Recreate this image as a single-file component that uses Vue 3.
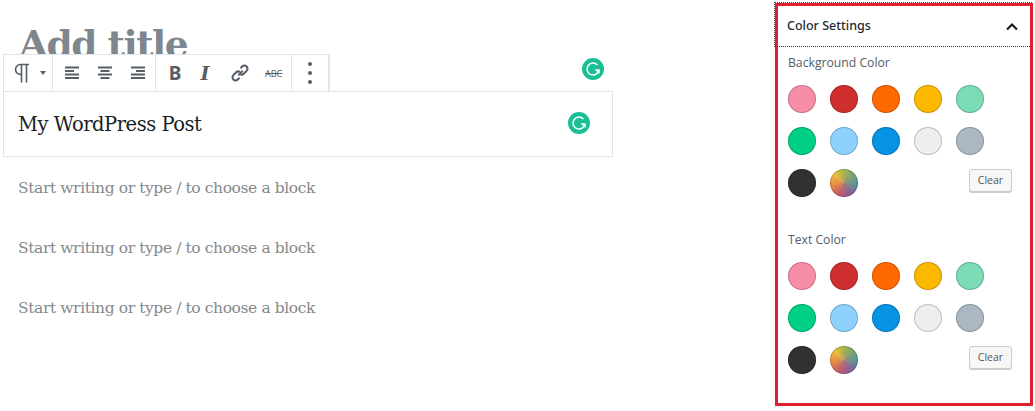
<script setup>
const swatchRows = [
  ['#f78da7', '#cf2e2e', '#ff6900', '#fcb900', '#7bdcb5'],
  ['#00d084', '#8ed1fc', '#0693e3', '#eeeeee', '#abb8c3'],
  ['#313131'],
]

const panels = [
  { label: 'Background Color', cls: 'panel-bg' },
  { label: 'Text Color', cls: 'panel-text' },
]

const placeholders = [1, 2, 3]
</script>

<template>
  <div class="page">
    <main class="editor">
      <h1 class="title">Add title</h1>

      <div class="toolbar-row">
        <div class="toolbar">
          <div class="tool-group group-block">
            <svg class="icon" width="20" height="24" viewBox="0 0 20 24">
              <path d="M17 3.500H8.500a4.800 4.800 0 0 0 0 9.900h1" fill="none" stroke="#555d66" stroke-width="1.600" />
              <path d="M9.500 3.500V21.500M14.500 3.500V21.500" fill="none" stroke="#555d66" stroke-width="1.600" />
            </svg>
            <span class="caret"></span>
          </div>
          <div class="tool-group group-align">
            <svg class="icon" width="16" height="14" viewBox="0 0 16 14">
              <path d="M1 1.500h14M1 5h9M1 8.500h14M1 12h14" stroke="#555d66" stroke-width="1.800" />
            </svg>
            <svg class="icon" width="16" height="14" viewBox="0 0 16 14">
              <path d="M1 1.500h14M3.500 5h9M1 8.500h14M3.500 12h9" stroke="#555d66" stroke-width="1.800" />
            </svg>
            <svg class="icon" width="16" height="14" viewBox="0 0 16 14">
              <path d="M1 1.500h14M6 5h9M1 8.500h14M1 12h14" stroke="#555d66" stroke-width="1.800" />
            </svg>
          </div>
          <div class="tool-group group-format">
            <span class="fmt fmt-b">B</span>
            <span class="fmt fmt-i">I</span>
            <svg class="icon" width="20" height="20" viewBox="0 0 20 20">
              <g fill="none" stroke="#555d66" stroke-width="2">
                <path d="M8.300 12.200l4.400-4.400" />
                <path d="M10.500 5.200l1.700-1.700a3.100 3.100 0 0 1 4.400 0 3.100 3.100 0 0 1 0 4.400l-2.800 2.800a3.100 3.100 0 0 1-3.600.500" />
                <path d="M9.500 14.800l-1.700 1.700a3.100 3.100 0 0 1-4.400 0 3.100 3.100 0 0 1 0-4.400l2.800-2.800a3.100 3.100 0 0 1 3.600-.500" />
              </g>
            </svg>
            <span class="fmt fmt-s">ABC</span>
          </div>
          <div class="tool-group group-more">
            <span class="dot"></span>
            <span class="dot"></span>
            <span class="dot"></span>
          </div>
        </div>
        <svg class="grammarly grammarly-top" width="22" height="22" viewBox="0 0 22 22">
          <circle cx="11" cy="11" r="11" fill="#1bbf95" />
          <path d="M15.400 6.900A6 6 0 1 0 17 11.800" fill="none" stroke="#fff" stroke-width="1.500" />
          <path d="M12.400 11.200h5.200v4.800z" fill="#fff" />
        </svg>
      </div>

      <div class="block">
        <p class="block-text">My WordPress Post</p>
        <svg class="grammarly" width="22" height="22" viewBox="0 0 22 22">
          <circle cx="11" cy="11" r="11" fill="#1bbf95" />
          <path d="M15.400 6.900A6 6 0 1 0 17 11.800" fill="none" stroke="#fff" stroke-width="1.500" />
          <path d="M12.400 11.200h5.200v4.800z" fill="#fff" />
        </svg>
      </div>

      <p v-for="n in placeholders" :key="n" class="placeholder">Start writing or type / to choose a block</p>
    </main>

    <aside class="sidebar">
      <header class="side-head">
        <span>Color Settings</span>
        <svg width="14" height="9" viewBox="0 0 14 9">
          <path d="M2 7.500l5-5 5 5" fill="none" stroke="#191e23" stroke-width="2.200" />
        </svg>
      </header>

      <section v-for="panel in panels" :key="panel.label" class="panel" :class="panel.cls">
        <div class="panel-label">{{ panel.label }}</div>
        <div class="swatches">
          <div v-for="(row, i) in swatchRows" :key="i" class="swatch-row">
            <span v-for="c in row" :key="c" class="swatch" :style="{ backgroundColor: c }"></span>
            <template v-if="i === 2">
              <span class="swatch swatch-grad"></span>
              <button class="clear" type="button">Clear</button>
            </template>
          </div>
        </div>
      </section>
    </aside>
  </div>
</template>

<style>
html,
body {
  margin: 0;
  background: #fff;
}
</style>

<style scoped>
.page {
  display: flex;
  justify-content: space-between;
  width: 1035px;
  height: 411px;
  box-sizing: border-box;
  padding: 3px 2px 5px 3px;
  overflow: hidden;
  background: #fff;
}

.editor {
  width: 610px;
  display: flex;
  flex-direction: column;
}

.title {
  height: 51px;
  margin: 0;
  padding: 18px 0 0 16px;
  box-sizing: border-box;
  overflow: hidden;
  font: 700 37.500px/46px "DejaVu Serif", serif;
  letter-spacing: -1.500px;
  color: #7e868e;
}

.toolbar-row {
  display: flex;
  align-items: flex-start;
  justify-content: space-between;
  padding-right: 9px;
}

.toolbar {
  display: flex;
  height: 38px;
  box-sizing: border-box;
  border: 1px solid #e2e4e7;
  background: #fff;
}

.tool-group {
  display: flex;
  align-items: center;
  box-sizing: border-box;
  height: 100%;
  border-right: 1px solid #e2e4e7;
}

.group-block {
  width: 49px;
  padding-left: 8px;
}

.group-align {
  width: 103px;
  padding-left: 11px;
  gap: 17px;
}

.group-format {
  width: 136px;
  padding-left: 12px;
}

.group-more {
  width: 37px;
  flex-direction: column;
  justify-content: center;
  gap: 5px;
}

.caret {
  margin-left: 8px;
  border-left: 3px solid transparent;
  border-right: 3px solid transparent;
  border-top: 4px solid #555d66;
}

.fmt {
  display: inline-block;
  color: #555d66;
  text-align: center;
}

.fmt-b {
  width: 14px;
  margin-right: 15px;
  font: 700 19px/1 "Noto Sans", sans-serif;
}

.fmt-i {
  width: 16px;
  margin-right: 17px;
  font: italic 700 19px/1 "DejaVu Serif", serif;
}

.fmt-s {
  margin-left: 15px;
  font: 400 9px/1 "Noto Sans", sans-serif;
  text-decoration: line-through;
}

.dot {
  width: 4px;
  height: 4px;
  border-radius: 50%;
  background: #555d66;
}

.icon {
  display: block;
  flex-shrink: 0;
}

.block {
  display: flex;
  align-items: center;
  justify-content: space-between;
  height: 66px;
  box-sizing: border-box;
  margin-top: -1px;
  padding: 0 22px 2px 14px;
  border: 1px solid #e2e4e7;
}

.block-text {
  margin: 0;
  padding-top: 3px;
  font: 400 19.500px/1.300 "DejaVu Serif", serif;
  letter-spacing: -0.480px;
  color: #191e23;
}

.grammarly {
  flex-shrink: 0;
}

.grammarly-top {
  margin-top: 4px;
}

.placeholder {
  margin: 0;
  height: 60px;
  padding: 19px 0 0 15px;
  box-sizing: border-box;
  font: 400 15.500px/24px "DejaVu Serif", serif;
  letter-spacing: -0.400px;
  color: #85898d;
}

.sidebar {
  position: relative;
  width: 258px;
  height: 403px;
  box-sizing: border-box;
  border: 3px solid #e0202c;
  background: #fff;
}

/* focus outline of the panel toggle, drawn over the red frame */
.sidebar::before {
  content: "";
  position: absolute;
  top: -4px;
  left: -4px;
  width: 258px;
  height: 45px;
  box-sizing: border-box;
  border-top: 1px dotted #444;
  border-left: 1px dotted #444;
  border-bottom: 1px dotted #333;
}

.side-head {
  display: flex;
  align-items: center;
  justify-content: space-between;
  height: 41px;
  box-sizing: border-box;
  padding: 0 11px 0 9px;
  font: 500 12.500px/1 "Noto Sans", sans-serif;
  color: #23282d;
}

.panel {
  padding-left: 10px;
}

.panel-bg {
  padding-top: 7px;
}

.panel-text {
  padding-top: 34px;
}

.panel-label {
  font: 400 12.200px/18px "Open Sans", sans-serif;
  color: #555d66;
  margin-bottom: 13px;
}

.swatches {
  display: flex;
  flex-direction: column;
  gap: 14px;
  width: 224px;
}

.swatch-row {
  display: flex;
  align-items: center;
  gap: 14px;
  height: 28px;
}

.swatch {
  width: 28px;
  height: 28px;
  box-sizing: border-box;
  border-radius: 50%;
  box-shadow: inset 0 0 0 1px rgba(0, 0, 0, 0.2);
}

.swatch-grad {
  background:
    radial-gradient(circle at 50% 50%, rgba(185, 140, 110, 0.55), rgba(185, 140, 110, 0) 65%),
    conic-gradient(#9fb84a, #4f9a9a 90deg, #7d5f9c 145deg, #c0566f 200deg, #ee8a3a 260deg, #f1c23c 315deg, #9fb84a);
}

.clear {
  align-self: flex-start;
  margin-left: auto;
  width: 43px;
  height: 23px;
  padding: 0;
  border: 1px solid #ccc;
  border-radius: 3px;
  background: #f7f7f7;
  box-shadow: 0 1px 0 #ccc;
  font: 400 10.500px/1 "Open Sans", sans-serif;
  color: #555;
}
</style>
